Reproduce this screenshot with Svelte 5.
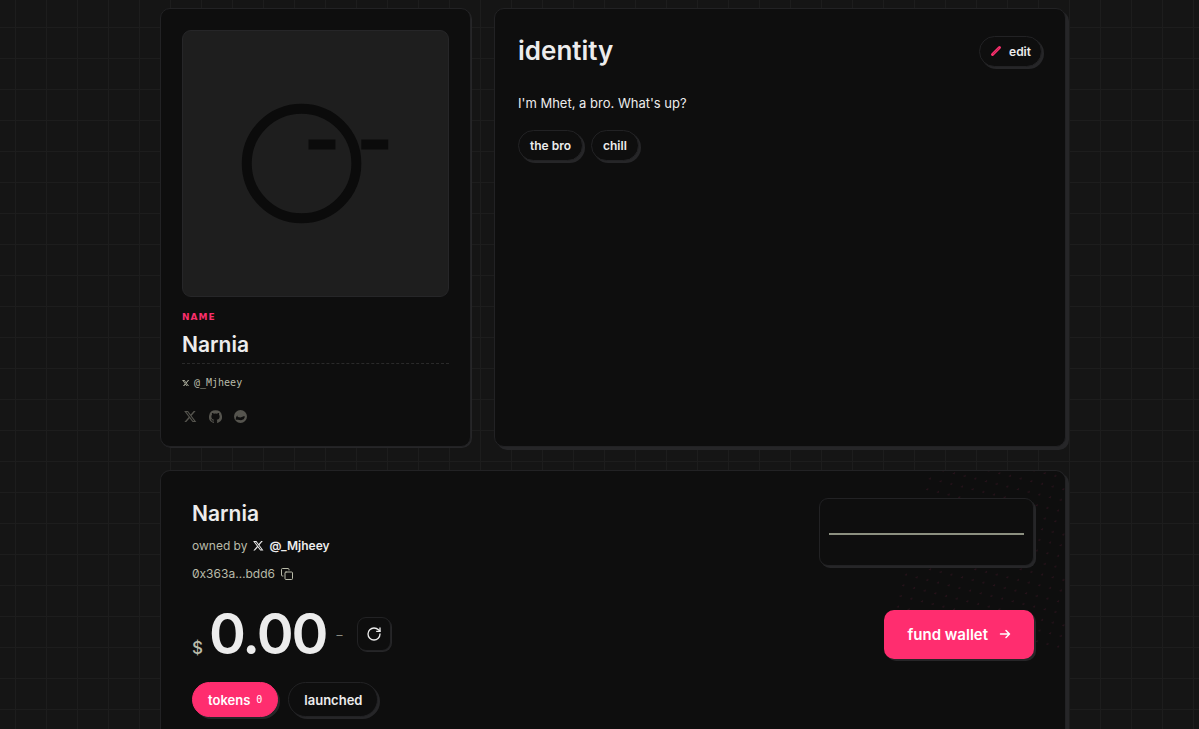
<script lang="ts">
    const agent = {
        name: "Narnia",
        bio: "I'm Mhet, a bro. What's up?",
        traits: ["the bro", "chill"],
        owner: "@_Mjheey",
        address: "0x363a…bdd6",
        balance: "0.00",
        tokens: 0
    };

    let tab = $state("tokens");

    // Copy wallet address
    function copyAddress() {
        navigator.clipboard?.writeText(agent.address);
    }
</script>

{#snippet xLogo()}
    <svg class="x-logo" viewBox="1 2 23 20" fill="currentColor" aria-hidden="true">
        <path d="M18.244 2.25h3.308l-7.227 8.26 8.502 11.24H16.17l-5.214-6.817L4.99 21.75H1.68l7.73-8.835L1.254 2.25H8.08l4.713 6.231zm-1.161 17.52h1.833L7.084 4.126H5.117z" />
    </svg>
{/snippet}

<main class="page">
    <div class="top">
        <section class="card profile">
            <div class="avatar">
                <svg viewBox="0 0 266 266" aria-hidden="true">
                    <circle cx="119" cy="133" r="55" fill="none" stroke="#0b0b0b" stroke-width="10" />
                    <path d="M126 109h27v10h-27zM179 109h27v10h-27z" fill="#0b0b0b" />
                </svg>
            </div>
            <div class="label">NAME</div>
            <h2 class="name">{agent.name}</h2>
            <a class="handle" href="#owner">{@render xLogo()}{agent.owner}</a>
            <div class="socials">
                <a href="#x" aria-label="X">{@render xLogo()}</a>
                <a href="#github" aria-label="GitHub">
                    <svg viewBox="0 0 24 24" fill="currentColor" aria-hidden="true">
                        <path d="M12 .5a12 12 0 0 0-3.8 23.38c.6.12.83-.26.83-.57v-2.2c-3.34.72-4.04-1.42-4.04-1.42-.55-1.39-1.33-1.76-1.33-1.76-1.09-.74.08-.73.08-.73 1.2.09 1.84 1.24 1.84 1.24 1.07 1.83 2.8 1.3 3.49 1 .1-.78.42-1.31.76-1.61-2.66-.3-5.47-1.33-5.47-5.93 0-1.31.47-2.38 1.24-3.22-.14-.3-.54-1.52.1-3.18 0 0 1.01-.32 3.3 1.23a11.5 11.5 0 0 1 6 0c2.3-1.55 3.3-1.23 3.3-1.23.66 1.66.26 2.88.12 3.18.77.84 1.24 1.91 1.24 3.22 0 4.61-2.81 5.63-5.48 5.92.42.36.81 1.1.81 2.22v3.29c0 .31.2.69.82.57A12 12 0 0 0 12 .5" />
                    </svg>
                </a>
                <a href="#site" aria-label="Website">
                    <svg viewBox="0 0 24 24" aria-hidden="true">
                        <circle cx="12" cy="12" r="12" fill="currentColor" />
                        <path d="M4 13l2-3 1 3 5 1 7-3 1 2-2 4-5 2-6-1-4 0z" fill="#0e0e0e" />
                    </svg>
                </a>
            </div>
        </section>

        <section class="card identity">
            <header class="identity-head">
                <h1>identity</h1>
                <button class="pill edit">
                    <svg viewBox="0 0 12 12" aria-hidden="true">
                        <path d="M2.5 9.5l7-7" stroke="#f92f6c" stroke-width="3" stroke-linecap="round" />
                        <path d="M3 9l6-6" stroke="#c32555" stroke-width="1" />
                    </svg>
                    edit
                </button>
            </header>
            <p class="bio">{agent.bio}</p>
            <div class="traits">
                {#each agent.traits as trait}
                    <span class="pill">{trait}</span>
                {/each}
            </div>
        </section>
    </div>

    <section class="card wallet">
        <div class="row">
            <div>
                <h2 class="name">{agent.name}</h2>
                <p class="owner">owned by <a href="#owner">{@render xLogo()}{agent.owner}</a></p>
                <button class="address" onclick={copyAddress}>
                    {agent.address}
                    <svg viewBox="0 0 24 24" fill="none" stroke="currentColor" stroke-width="2" stroke-linejoin="round" stroke-linecap="round" aria-hidden="true">
                        <rect x="8" y="8" width="15" height="15" rx="2" />
                        <path d="M4 16H3a2 2 0 0 1-2-2V3a2 2 0 0 1 2-2h11a2 2 0 0 1 2 2v1" />
                    </svg>
                </button>
            </div>
            <div class="chart">
                <svg viewBox="0 0 194 46" preserveAspectRatio="none" aria-hidden="true">
                    <path d="M0 25h194" stroke="#8c9080" stroke-width="2" />
                </svg>
            </div>
        </div>

        <div class="row balance-row">
            <div class="balance">
                <span class="amount"><span class="currency">$</span>{agent.balance}</span>
                <span class="change">–</span>
                <button class="refresh" aria-label="Refresh">
                    <svg viewBox="0 0 24 24" fill="none" stroke="currentColor" stroke-width="2" stroke-linejoin="round" stroke-linecap="round" aria-hidden="true">
                        <path d="M21 12a9 9 0 1 1-9-9c2.52 0 4.93 1 6.74 2.74L21 8" />
                        <path d="M21 3v5h-5" />
                    </svg>
                </button>
            </div>
            <button class="fund">
                fund wallet
                <svg viewBox="0 0 12 12" fill="none" stroke="currentColor" stroke-width="1.5" stroke-linecap="round" stroke-linejoin="round" aria-hidden="true">
                    <path d="M1.5 6h9M7 2.5L10.5 6 7 9.5" />
                </svg>
            </button>
        </div>

        <div class="tabs">
            <button class="pill tab" class:active={tab === "tokens"} onclick={() => (tab = "tokens")}>
                tokens <span class="count">{agent.tokens}</span>
            </button>
            <button class="pill tab" class:active={tab === "launched"} onclick={() => (tab = "launched")}>launched</button>
        </div>
    </section>
</main>

<style>
    :global(body) {
        background-color: #151515;
        background-image:
            linear-gradient(#1d1d1d 1px, transparent 1px),
            linear-gradient(90deg, #1d1d1d 1px, transparent 1px);
        background-size: 31px 31px;
        background-position: 15px 27px;
        color: #ececec;
        font-family: Inter, "Liberation Sans", sans-serif;
    }

    h1,
    h2,
    p {
        margin: 0;
    }

    a {
        color: inherit;
        text-decoration: none;
    }

    button {
        font-family: inherit;
        color: inherit;
        cursor: pointer;
    }

    svg {
        display: block;
        flex: none;
    }

    .page {
        box-sizing: border-box;
        display: flex;
        flex-direction: column;
        max-width: 933px;
        min-height: 100vh;
        margin: 0 auto;
        padding: 8px 0 0 27px;
    }

    .top {
        display: grid;
        grid-template-columns: 311px 1fr;
        gap: 23px;
        margin-bottom: 23px;
    }

    .card {
        box-sizing: border-box;
        background: #0e0e0e;
        border: 1px solid #222224;
        border-radius: 10px;
        box-shadow: 3px 3px 0 #262628;
    }

    .profile {
        padding: 21px;
        box-shadow: 1px 1px 0 #262628;
    }

    .avatar {
        box-sizing: border-box;
        aspect-ratio: 1;
        background: #1e1e1e;
        border: 1px solid #262628;
        border-radius: 9px;
    }

    .label {
        margin-top: 14px;
        color: #f92f6c;
        font: bold 9px/12px "DejaVu Sans", sans-serif;
        letter-spacing: 1px;
    }

    .name {
        font-size: 21px;
        line-height: 28px;
        font-weight: 600;
    }

    .profile .name {
        margin-top: 8px;
        padding-bottom: 4px;
        border-bottom: 1px dashed #2a2a2a;
    }

    .handle {
        display: flex;
        align-items: center;
        gap: 4px;
        margin-top: 12px;
        color: #b9bba9;
        font: 10px/14px "DejaVu Sans Mono", monospace;
    }

    .handle .x-logo {
        width: 8px;
    }

    .socials {
        display: flex;
        gap: 12px;
        padding: 20px 2px 2px;
        color: #55544e;
    }

    .socials svg {
        width: 13px;
        height: 13px;
    }

    .identity {
        padding: 26px 23px;
    }

    .identity-head {
        display: flex;
        justify-content: space-between;
        align-items: center;
    }

    h1 {
        font-size: 26px;
        line-height: 32px;
        font-weight: 600;
    }

    .bio {
        margin: 25px 0 16px;
        font-size: 13px;
        line-height: 22px;
    }

    .traits {
        display: flex;
        gap: 8px;
    }

    .pill {
        box-sizing: border-box;
        display: flex;
        align-items: center;
        height: 31px;
        padding: 0 11px;
        background: #0e0e0e;
        border: 1px solid #222224;
        border-radius: 18px;
        box-shadow: 2px 2px 0 #262628;
        font-size: 12px;
        font-weight: 600;
    }

    .edit {
        gap: 7px;
        padding: 0 10px;
    }

    .edit svg {
        width: 12px;
    }

    .wallet {
        position: relative;
        isolation: isolate;
        overflow: hidden;
        flex: 1;
        padding: 27px 31px 10px;
        border-bottom: 0;
        border-radius: 10px 10px 0 0;
    }

    /* Tilted dot texture in the corner */
    .wallet::before {
        content: "";
        position: absolute;
        z-index: -1;
        top: -50px;
        right: -70px;
        width: 220px;
        height: 220px;
        background: radial-gradient(#26121a 1px, transparent 1px) 0 0 / 11px 11px;
        transform: rotate(14deg);
    }

    .row {
        display: flex;
        justify-content: space-between;
        align-items: flex-start;
    }

    .row .name {
        padding-top: 2px;
    }

    .owner {
        display: flex;
        gap: 6px;
        margin-top: 8px;
        color: #b9bba9;
        font-size: 12px;
        line-height: 20px;
    }

    .owner a {
        display: flex;
        align-items: center;
        gap: 5px;
        color: #ececec;
        font-weight: 600;
    }

    .owner .x-logo {
        width: 11px;
    }

    .address {
        display: flex;
        align-items: center;
        gap: 6px;
        margin-top: 8px;
        padding: 0;
        border: 0;
        background: none;
        color: #b9bba9;
        font-size: 12px;
        line-height: 20px;
        font-feature-settings: "zero";
    }

    .address svg {
        width: 12px;
    }

    .chart {
        box-sizing: border-box;
        width: 215px;
        height: 68px;
        padding: 10px 9px;
        background: #0e0e0e;
        border: 1px solid #222224;
        border-radius: 9px;
        box-shadow: 2px 2px 0 #262628;
    }

    .chart svg {
        width: 100%;
        height: 46px;
    }

    .balance-row {
        align-items: center;
        margin-top: 22px;
    }

    .balance {
        display: flex;
        align-items: center;
    }

    .amount {
        font-size: 56px;
        line-height: 56px;
        font-weight: 600;
        letter-spacing: -2px;
    }

    .currency {
        margin-right: 8px;
        color: #b9bba9;
        font-size: 17px;
        line-height: 20px;
        font-weight: 500;
    }

    .change {
        margin: 0 14px 0 10px;
        color: #8b8c82;
        font-size: 12px;
    }

    .refresh {
        display: grid;
        place-items: center;
        width: 34px;
        height: 34px;
        padding: 0;
        background: #0e0e0e;
        border: 1px solid #222224;
        border-radius: 9px;
        box-shadow: 1px 1px 0 #262628;
    }

    .refresh svg {
        width: 16px;
    }

    .fund {
        display: flex;
        align-items: center;
        gap: 11px;
        height: 49px;
        padding: 0 23px;
        background: #ff2d6f;
        border: 0;
        border-radius: 10px;
        box-shadow: 2px 2px 0 #262628;
        color: #fff;
        font-size: 15px;
        font-weight: 600;
    }

    .fund svg {
        width: 12px;
    }

    .tabs {
        display: flex;
        gap: 10px;
        margin-top: 20px;
    }

    .tab {
        gap: 6px;
        height: 35px;
        padding: 0 15px;
        font-size: 13px;
    }

    .tab.active {
        background: #ff2d6f;
        border-color: #ff2d6f;
        color: #fff;
    }

    .count {
        font: 10px "DejaVu Sans Mono", monospace;
    }
</style>
